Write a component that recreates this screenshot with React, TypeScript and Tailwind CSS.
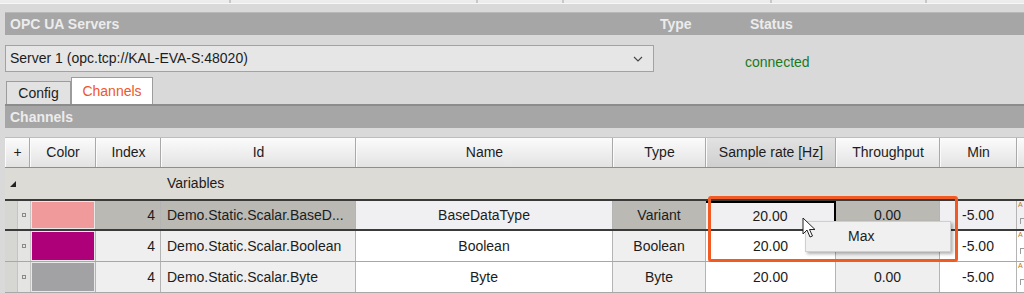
import React from "react";

function HeaderCell({ w, children, pressed }: { w: number; children?: React.ReactNode; pressed?: boolean }) {
  return (
    <div
      style={{ width: w }}
      className={
        "shrink-0 h-full flex items-center justify-center border-r border-[#a9a9a9] border-l border-l-[#fbfbfb] " +
        (pressed
          ? "bg-gradient-to-b from-[#e2e2e2] to-[#cfcfcf]"
          : "bg-gradient-to-b from-[#fbfbfb] to-[#e3e3e3]")
      }
    >
      {children}
    </div>
  );
}

type RowProps = {
  color: string;
  id: string;
  name: string;
  type: string;
  selected?: boolean;
};

function DataRow({ color, id, name, type, selected }: RowProps) {
  const ro = selected ? "bg-[#bab9b4]" : "bg-[#efefef]";
  const ed = selected ? "bg-[#f0f0f2]" : "bg-white";
  const cell = "shrink-0 h-full flex items-center border-r border-[#b4b4b4]";
  return (
    <div
      className={
        "flex h-[31px] " +
        (selected ? "border-t-2 border-b-2 border-[#3a3a3a] h-[32px]" : "border-b border-[#a8a8a8]")
      }
    >
      <div className="w-[12px] shrink-0 h-full bg-[#d6d6d2]" />
      <div className="w-[14px] shrink-0 h-full bg-[#e4e4e2] border-x border-[#c4c4c4] flex items-center justify-center">
        <div className="w-[4px] h-[4px] border border-[#8a8a8a]" />
      </div>
      <div style={{ width: 65 }} className="shrink-0 h-full p-[1px] bg-[#e8e8e8] border-r border-[#b4b4b4]">
        <div className="w-full h-full" style={{ background: color }} />
      </div>
      <div style={{ width: 65 }} className={cell + " justify-end pr-[5px] " + ro}>4</div>
      <div style={{ width: 195 }} className={cell + " pl-[6px] whitespace-nowrap overflow-hidden " + ro}>{id}</div>
      <div style={{ width: 257 }} className={cell + " justify-center " + ed}>{name}</div>
      <div style={{ width: 93 }} className={cell + " justify-center " + ro}>{type}</div>
      <div
        style={{ width: 130 }}
        className={
          cell +
          " justify-center " +
          ed +
          (selected ? " border-t-2 border-t-black border-r-2 border-r-black" : "")
        }
      >
        20.00
      </div>
      <div style={{ width: 104 }} className={cell + " justify-center " + ro}>0.00</div>
      <div style={{ width: 77 }} className={cell + " justify-center " + ed}>-5.00</div>
      <div className={"flex-1 h-full relative " + ed}>
        <span className="absolute left-[1px] top-[0px] text-[7px] leading-[8px] text-[#c07020]">A</span>
        <div className="absolute left-[3px] top-[17px] w-[6px] h-[6px] border-l border-t border-[#9a9a9a]" />
      </div>
    </div>
  );
}

export default function App() {
  return (
    <div className="relative w-[1024px] h-[293px] overflow-hidden bg-[#d9d9d9] font-['Liberation_Sans',Arial,sans-serif] text-[14px] text-[#1c1c1c]">
      {/* top strip */}
      <div className="flex h-[4px] border-b border-[#f7f7f7]">
        <div className="w-[231px] bg-[#ececec] border-r-2 border-[#c8c8c8]" />
        <div className="w-[247px] bg-[#ececec] border-r-2 border-[#c8c8c8]" />
        <div className="w-[86px] bg-[#ececec] border-r-2 border-[#c8c8c8]" />
        <div className="w-[208px] bg-[#ececec] border-r-2 border-[#c8c8c8]" />
        <div className="w-[155px] bg-[#ececec] border-r-2 border-[#c8c8c8]" />
        <div className="flex-1 bg-[#ececec]" />
      </div>

      <div className="pl-[5px] pt-[8px]">
        {/* OPC UA Servers bar */}
        <div className="h-[23px] bg-[#a6a6a6] flex items-center font-bold text-[#ececec] border-t border-[#b8b8b8]">
          <span className="pl-[5px] w-[655px]">OPC UA Servers</span>
          <span className="w-[90px]">Type</span>
          <span>Status</span>
        </div>

        {/* combo */}
        <div className="flex items-center mt-[10px] h-[27px]">
          <div className="w-[649px] h-full bg-[#e6e6e6] border border-[#a2a2a2] flex items-center pl-[4px] pr-[8px]">
            <span className="flex-1">Server 1 (opc.tcp://KAL-EVA-S:48020)</span>
            <svg width="10" height="6" viewBox="0 0 10 6" className="mr-[2px]">
              <path d="M1 1 L5 5 L9 1" fill="none" stroke="#444" strokeWidth="1.1" />
            </svg>
          </div>
          <span className="ml-[91px] mt-[7px] text-[#1b7a1b]">connected</span>
        </div>

        {/* tabs */}
        <div className="flex items-end h-[32px]">
          <div className="w-[65px] h-[23px] bg-[#e2e2e2] border border-b-0 border-[#9c9c9c] flex items-center justify-center ml-[1px]">
            Config
          </div>
          <div className="w-[82px] h-[27px] bg-white border border-b-0 border-[#9c9c9c] flex items-center justify-center text-[#f0562a]">
            Channels
          </div>
        </div>

        {/* Channels bar */}
        <div className="h-[24px] bg-[#a6a6a6] flex items-center font-bold text-[#ececec] border-t-2 border-[#8c8c8c]">
          <span className="pl-[5px]">Channels</span>
        </div>

        {/* table header */}
        <div className="flex h-[31px] mt-[9px] border-t border-[#bdbdbd] border-b border-b-[#8e8e8e]">
          <HeaderCell w={25}>+</HeaderCell>
          <HeaderCell w={66}>Color</HeaderCell>
          <HeaderCell w={65}>Index</HeaderCell>
          <HeaderCell w={195}>Id</HeaderCell>
          <HeaderCell w={257}>Name</HeaderCell>
          <HeaderCell w={93}>Type</HeaderCell>
          <HeaderCell w={130} pressed>Sample rate [Hz]</HeaderCell>
          <HeaderCell w={104}>Throughput</HeaderCell>
          <HeaderCell w={77}>Min</HeaderCell>
          <div className="flex-1 h-full bg-gradient-to-b from-[#fbfbfb] to-[#e3e3e3] border-l border-[#fbfbfb]" />
        </div>

        {/* group row */}
        <div className="flex items-center h-[31px] bg-[#dcdbd6]">
          <svg width="6" height="6" viewBox="0 0 6 6" className="ml-[5px]">
            <path d="M6 0 L6 6 L0 6 Z" fill="#222" />
          </svg>
          <span className="ml-[151px]">Variables</span>
        </div>

        <DataRow color="#f09a9b" id="Demo.Static.Scalar.BaseD..." name="BaseDataType" type="Variant" selected />
        <DataRow color="#ae0078" id="Demo.Static.Scalar.Boolean" name="Boolean" type="Boolean" />
        <DataRow color="#a2a2a4" id="Demo.Static.Scalar.Byte" name="Byte" type="Byte" />
      </div>

      {/* orange highlight */}
      <div className="absolute left-[708px] top-[196px] w-[250px] h-[66px] border-[3px] border-[#f25a24] rounded-[3px]" />

      {/* context menu */}
      <div className="absolute left-[805px] top-[221px] w-[146px] h-[31px] bg-[#f0f0f0] border border-[#cfcfcf] shadow-[2px_2px_3px_rgba(0,0,0,0.3)] flex items-center">
        <span className="ml-[42px]">Max</span>
      </div>

      {/* cursor */}
      <svg className="absolute left-[802px] top-[217px]" width="14" height="22" viewBox="0 0 14 22">
        <path d="M1 1 L1 17 L5 13 L8 20 L10.5 19 L7.5 12.5 L13 12.5 Z" fill="white" stroke="#222" strokeWidth="1" strokeLinejoin="round" />
      </svg>
    </div>
  );
}
